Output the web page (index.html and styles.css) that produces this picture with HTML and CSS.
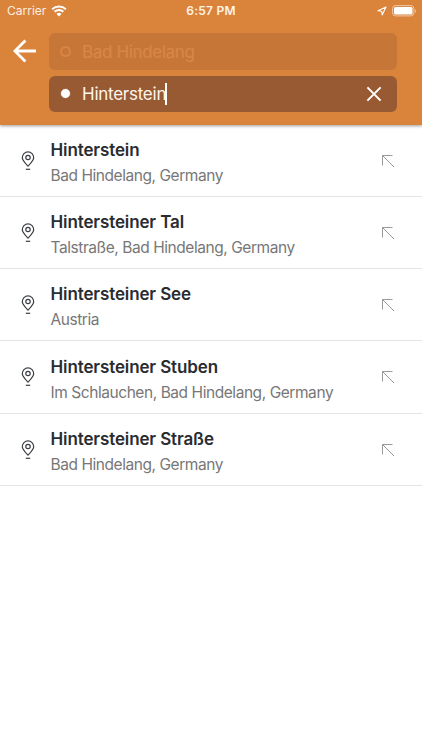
FILE: index.html
```html
<!DOCTYPE html>
<html lang="en">
<head>
<meta charset="utf-8">
<title>Search destination</title>
<link rel="stylesheet" href="styles.css">
</head>
<body>
<svg class="symbols" aria-hidden="true">
  <symbol id="pin" viewBox="0 0 14 20">
    <path d="M7 15.2C4.9 13 1.3 9.7 1.3 6.6a5.7 5.7 0 0 1 11.4 0c0 3.1-3.6 6.4-5.7 8.6z"/>
    <circle cx="7" cy="6.5" r="2.2"/>
    <path d="M4.8 18.3h4.4"/>
  </symbol>
  <symbol id="fill" viewBox="0 0 14 14">
    <path d="M1.5 11.5V1.5H11.5M1.5 1.5L13 13"/>
  </symbol>
</svg>
<header class="header">
  <div class="status">
    <div class="status-left">
      <span class="carrier">Carrier</span>
      <svg class="wifi" viewBox="0 0 16 12">
        <path d="M1.2 4.3a9.8 9.8 0 0 1 13.6 0M3.6 6.8a6.3 6.3 0 0 1 8.8 0"/>
        <path class="solid" d="M8 11.5L5.5 9a3.6 3.6 0 0 1 5 0z"/>
      </svg>
    </div>
    <span class="time">6:57 PM</span>
    <div class="status-right">
      <svg class="location" viewBox="0 0 10 10"><path d="M9 1L1 4.8l3.7.5.5 3.7z"/></svg>
      <svg class="battery" viewBox="0 0 25 12">
        <rect class="shell" x=".6" y=".6" width="21.3" height="10.3" rx="3"/>
        <rect class="charge" x="2" y="2" width="18.5" height="7.5" rx="1.5"/>
        <path class="cap" d="M23 4v4c1.2-.5 1.2-3.5 0-4z"/>
      </svg>
    </div>
  </div>
  <div class="search">
    <svg class="back" viewBox="0 0 24 24"><path d="M23 12H2.7M12.4 1.4L1.9 12l10.5 10.6"/></svg>
    <div class="fields">
      <div class="field origin"><span class="dot"></span><span class="value">Bad Hindelang</span></div>
      <div class="field destination">
        <span class="dot"></span><span class="value">Hinterstein</span><span class="caret"></span>
        <svg class="clear" viewBox="0 0 16 16"><path d="M1.4 1.4l13.2 13.2M14.6 1.4l-13.2 13.2"/></svg>
      </div>
    </div>
  </div>
</header>
<main class="results">
  <div class="row">
    <svg class="pin"><use href="#pin"/></svg>
    <div class="text"><div class="title">Hinterstein</div><div class="place">Bad Hindelang, Germany</div></div>
    <svg class="fill"><use href="#fill"/></svg>
  </div>
  <div class="row">
    <svg class="pin"><use href="#pin"/></svg>
    <div class="text"><div class="title">Hintersteiner Tal</div><div class="place">Talstraße, Bad Hindelang, Germany</div></div>
    <svg class="fill"><use href="#fill"/></svg>
  </div>
  <div class="row">
    <svg class="pin"><use href="#pin"/></svg>
    <div class="text"><div class="title">Hintersteiner See</div><div class="place">Austria</div></div>
    <svg class="fill"><use href="#fill"/></svg>
  </div>
  <div class="row">
    <svg class="pin"><use href="#pin"/></svg>
    <div class="text"><div class="title">Hintersteiner Stuben</div><div class="place">Im Schlauchen, Bad Hindelang, Germany</div></div>
    <svg class="fill"><use href="#fill"/></svg>
  </div>
  <div class="row">
    <svg class="pin"><use href="#pin"/></svg>
    <div class="text"><div class="title">Hintersteiner Straße</div><div class="place">Bad Hindelang, Germany</div></div>
    <svg class="fill"><use href="#fill"/></svg>
  </div>
</main>
</body>
</html>
```
FILE: styles.css
```css
* { box-sizing: border-box; }
body {
  margin: 0;
  height: 750px;
  overflow: hidden;
  background: #fff;
  font-family: Inter, "Liberation Sans", sans-serif;
}
svg { display: block; flex: none; fill: none; stroke: #fff; }
.symbols { width: 0; height: 0; position: absolute; }

.header {
  height: 124.5px;
  background: #da833b;
  box-shadow: 0 1px 3px rgba(0, 0, 0, .4);
}
.status {
  display: grid;
  grid-template-columns: 1fr auto 1fr;
  align-items: center;
  height: 22px;
  padding: 0 7px;
  color: #fff;
  font-size: 12px;
  line-height: 22px;
}
.status-left, .status-right { display: flex; align-items: center; }
.status-right { justify-content: flex-end; gap: 5px; }
.carrier { color: #fdeee0; }
.wifi { width: 16px; height: 12px; margin-left: 4.5px; stroke-width: 2; }
.wifi .solid { fill: #fff; stroke: none; }
.time { font-weight: 600; letter-spacing: .25px; color: #fff3e8; }
.location { width: 10px; height: 10px; stroke-width: 1.1; stroke-linejoin: round; }
.battery { width: 25px; height: 12px; margin-right: -1.5px; }
.shell { stroke: #f0c9a8; stroke-width: 1; }
.charge { fill: #fff; stroke: none; }
.cap { fill: #f0c9a8; stroke: none; }

.search { display: flex; padding: 11px 25px 0 13px; }
.back { width: 24px; height: 24px; margin: 6px 12px 0 0; stroke-width: 2.8; }
.fields { flex: 1; display: flex; flex-direction: column; gap: 6px; }
.field {
  display: flex;
  align-items: center;
  height: 36.5px;
  padding: 0 15px 0 11px;
  border-radius: 6px;
  font-size: 17px;
}
.origin { background: #c67738; color: #d98748; }
.destination { background: #985a33; color: #fff5ee; }
.dot { width: 11px; height: 11px; margin-right: 11px; border-radius: 50%; }
.origin .dot { border: 2px solid #da8443; }
.destination .dot { background: #fff; border: 1px solid #985a33; }
.value { padding-top: 1px; }
.origin .value { letter-spacing: -.35px; }
.destination .value { letter-spacing: -.25px; }
.caret { width: 2px; height: 22px; margin-left: -1.5px; background: #fff; }
.clear { width: 16px; height: 16px; margin-left: auto; stroke-width: 2; }

.row {
  display: flex;
  align-items: center;
  height: 72.25px;
  padding: 0 27px 0 20.5px;
  border-bottom: 1px solid #e4e4e4;
}
.pin { width: 14px; height: 20px; margin: 1px 16px 0 0; stroke: #3b3e43; stroke-width: 1.2; }
.text { flex: 1; padding-top: 5.6px; white-space: nowrap; }
.title { color: #292c31; font-size: 17px; font-weight: 600; line-height: 26px; letter-spacing: -.12px; }
.place { color: #777; font-size: 15.5px; line-height: 26px; letter-spacing: -.44px; }
.fill { width: 14px; height: 14px; margin-top: 1px; stroke: #999; stroke-width: 1; }
```
